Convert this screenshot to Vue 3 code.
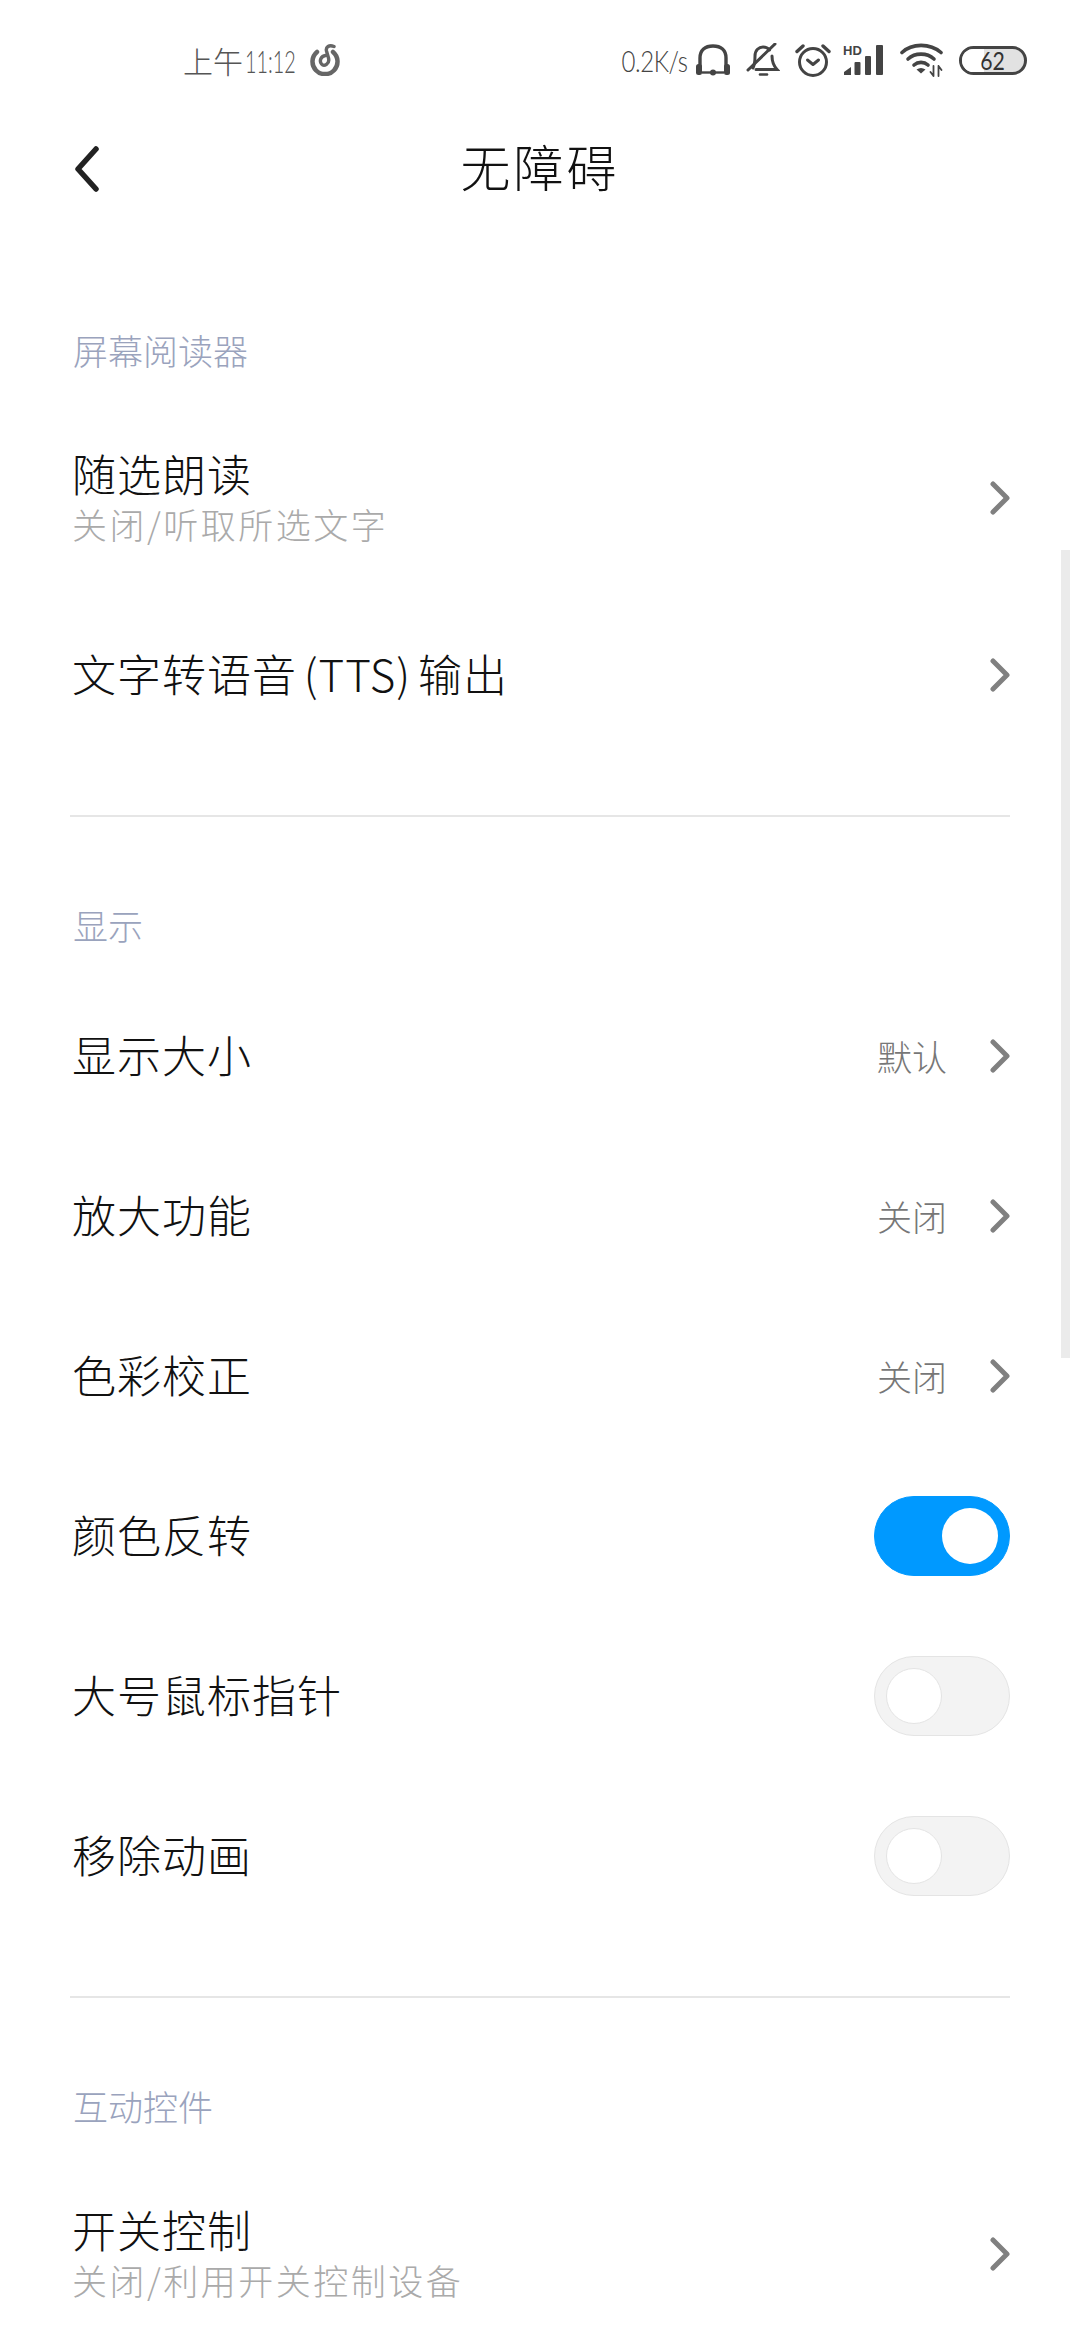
<template>
  <div class="screen">
    <div class="status-bar">
      <div class="status-left">
        <span class="time">上午<span class="time-num">11:12</span></span>
        <svg class="netease" width="30" height="32" viewBox="0 0 30 32" fill="none" stroke="#666" stroke-width="4.500" stroke-linecap="round">
          <path d="M7 8A12.500 12.500 0 1 0 23 8" />
          <path d="M24 2.500C19 0.500 15.500 3 16.500 7L18.500 14C20 20 14 23 11.500 20C9 17 11 12 15.500 11.500" stroke-width="3.400" />
        </svg>
      </div>
      <div class="status-right">
        <span class="speed">0.2K/s</span>
        <svg class="ic-headset" width="34" height="32" viewBox="0 0 34 32" fill="none" stroke="#444" stroke-width="3.400">
          <path d="M4 24V14C4 6 9 2 17 2S30 6 30 14V24" />
          <rect x="0" y="20" width="6" height="11" rx="2.500" fill="#444" stroke="none" />
          <rect x="28" y="20" width="6" height="11" rx="2.500" fill="#444" stroke="none" />
          <path d="M6 28.500H28" stroke-width="2.400" />
          <circle cx="17" cy="28.500" r="3" fill="#444" stroke="none" />
        </svg>
        <svg class="ic-bell" width="34" height="34" viewBox="0 0 34 34" fill="none" stroke="#444" stroke-width="3" stroke-linecap="round">
          <path d="M7 25C9 21 9 18 9 13C9 7 13 4 17 4C19.500 4 22 5 23.500 7" />
          <path d="M26 13C26 18 27 22 31 26.500H10" />
          <path d="M2 27L29 1" />
          <path d="M14 31.500H21" stroke-width="2.600" />
        </svg>
        <svg class="ic-alarm" width="36" height="34" viewBox="0 0 36 34" fill="none" stroke="#444" stroke-width="3" stroke-linecap="round" stroke-linejoin="round">
          <circle cx="18" cy="19" r="13.500" />
          <path d="M12.500 17L18 21.500L23.500 17" />
          <path d="M2 8.500L8 3" stroke-width="3.400" />
          <path d="M34 8.500L28 3" stroke-width="3.400" />
        </svg>
        <svg class="ic-signal" width="44" height="32" viewBox="0 0 44 32" fill="#444">
          <text class="hd" x="0" y="11">HD</text>
          <path d="M1 31V28L8 23V31Z" />
          <rect x="11.500" y="18" width="6" height="13" rx="1" />
          <rect x="22" y="12" width="6" height="19" rx="1" />
          <rect x="33" y="1" width="7" height="30" rx="1" />
        </svg>
        <svg class="ic-wifi" width="44" height="34" viewBox="0 0 44 34" fill="none" stroke="#444" stroke-width="3.600" stroke-linecap="round">
          <path d="M2 9.500C12 0 30 0 41 9.500" />
          <path d="M8 16C15 9.500 27 9.500 34 16" />
          <path d="M14 22C18 18.500 24 18.500 28 22" />
          <path d="M16.500 26.500L21 30.500L25.500 26.500C22.500 24.500 19.500 24.500 16.500 26.500Z" fill="#444" stroke="none" />
          <path d="M33.500 23V33M30.500 29L33.500 33M38.500 33V23M38.500 23L41.500 27" stroke-width="1.800" />
        </svg>
        <div class="battery">
          <div class="battery-fill"></div>
          <span class="battery-num">62</span>
        </div>
      </div>
    </div>

    <div class="nav">
      <svg class="back" width="24" height="46" viewBox="0 0 24 46" fill="none" stroke="#222" stroke-width="5.500" stroke-linecap="round" stroke-linejoin="round">
        <path d="M21 3L3 23L21 43" />
      </svg>
      <span class="nav-title">无障碍</span>
    </div>

    <div class="list">
      <section v-for="(section, i) in sections" :key="section.title" class="section" :class="{ first: i === 0 }">
        <div class="section-title">{{ section.title }}</div>
        <div v-for="row in section.rows" :key="row.title" class="row" :class="{ tall: row.sub }">
          <div class="row-text">
            <div class="row-title">{{ row.title }}</div>
            <div v-if="row.sub" class="row-sub">{{ row.sub }}</div>
          </div>
          <span v-if="row.value" class="row-value">{{ row.value }}</span>
          <div v-if="row.toggle !== undefined" class="toggle" :class="{ on: row.toggle }">
            <span class="knob"></span>
          </div>
          <svg v-else class="chevron" width="20" height="34" viewBox="0 0 20 34" fill="none" stroke="#808080" stroke-width="5" stroke-linecap="round" stroke-linejoin="round">
            <path d="M3 3L17 17L3 31" />
          </svg>
        </div>
      </section>
    </div>

    <div class="scrollbar"></div>
  </div>
</template>

<script setup>
const sections = [
  {
    title: '屏幕阅读器',
    rows: [
      { title: '随选朗读', sub: '关闭/听取所选文字' },
      { title: '文字转语音 (TTS) 输出' }
    ]
  },
  {
    title: '显示',
    rows: [
      { title: '显示大小', value: '默认' },
      { title: '放大功能', value: '关闭' },
      { title: '色彩校正', value: '关闭' },
      { title: '颜色反转', toggle: true },
      { title: '大号鼠标指针', toggle: false },
      { title: '移除动画', toggle: false }
    ]
  },
  {
    title: '互动控件',
    rows: [
      { title: '开关控制', sub: '关闭/利用开关控制设备' }
    ]
  }
]
</script>

<style>
html,
body {
  margin: 0;
  background: #fff;
}
</style>

<style scoped>
.screen {
  position: relative;
  width: 1080px;
  height: 2340px;
  overflow: hidden;
  background: #fff;
  font-family: "Noto Sans CJK SC", "Noto Sans", sans-serif;
  font-weight: 300;
}

.status-bar {
  display: flex;
  justify-content: space-between;
  align-items: center;
  height: 124px;
  padding: 0 53px 4px 183px;
  box-sizing: border-box;
}

.status-left,
.status-right {
  display: flex;
  align-items: center;
}

.time {
  font-size: 30px;
  color: #555;
  margin-right: 17px;
  white-space: nowrap;
}

/* digits of the reference's font are very narrow, squeeze them */
.time-num {
  display: inline-block;
  width: 78px;
  margin-right: -30px;
  margin-left: 2px;
  font-family: Lato, "Liberation Sans", sans-serif;
  font-size: 32px;
  font-weight: 300;
  transform: scaleX(0.62);
  transform-origin: left center;
}

.speed {
  font-family: Lato, "Liberation Sans", sans-serif;
  font-size: 30px;
  font-weight: 300;
  color: #444;
  margin-right: 8px;
  letter-spacing: -0.500px;
  transform: scaleX(0.8);
  transform-origin: right center;
}

.ic-bell {
  margin-left: 16px;
}

.ic-alarm {
  margin-left: 15px;
}

.ic-signal {
  margin-left: 12px;
}

.ic-wifi {
  margin-left: 13px;
}

.hd {
  font-family: "Liberation Sans", sans-serif;
  font-size: 13px;
  font-weight: 700;
}

.battery {
  position: relative;
  width: 68px;
  height: 29px;
  margin-left: 15px;
  box-sizing: border-box;
  border: 3px solid #444;
  border-radius: 15px;
  display: flex;
  align-items: center;
  justify-content: center;
  overflow: hidden;
  background: #e2e2e2;
}

.battery-fill {
  position: absolute;
  top: 0;
  bottom: 0;
  left: 0;
  width: 36%;
  background: #fff;
}

.battery-num {
  position: relative;
  font-family: Lato, "Liberation Sans", sans-serif;
  font-size: 25px;
  font-weight: 400;
  color: #333;
  transform: scaleX(0.85);
}

.nav {
  position: relative;
  display: flex;
  align-items: center;
  justify-content: center;
  height: 88px;
}

.back {
  position: absolute;
  left: 75px;
  top: 22px;
}

.nav-title {
  font-size: 50px;
  color: #111;
  letter-spacing: 3px;
  margin-top: -6px;
}

.section {
  padding: 83px 0 60px;
  margin: 0 70px;
  border-bottom: 2px solid #e6e6e6;
}

.section.first {
  padding-top: 113px;
}

.section:last-child {
  border-bottom: none;
}

.section-title {
  height: 50px;
  line-height: 50px;
  margin-bottom: 26px;
  padding-left: 3px;
  font-size: 35px;
  color: #9aa3bd;
}

.row {
  display: flex;
  align-items: center;
  height: 160px;
}

.row.tall {
  height: 194px;
}

.row-text {
  flex: 1;
  padding: 0 0 5px 2px;
}

.row.tall .row-text {
  padding-bottom: 0;
}

.row-title {
  font-size: 44px;
  line-height: 52px;
  color: #111;
  letter-spacing: 1px;
  word-spacing: -4px;
}

.row-sub {
  font-size: 35px;
  line-height: 50px;
  color: #aaa;
  letter-spacing: 2.500px;
}

.row-value {
  font-size: 35px;
  color: #777;
  margin-right: 43px;
  padding-bottom: 2px;
}

.chevron {
  flex: none;
}

.toggle {
  position: relative;
  flex: none;
  width: 136px;
  height: 80px;
  box-sizing: border-box;
  border-radius: 40px;
  background: #f3f3f3;
  border: 1px solid #e4e4e4;
}

.toggle.on {
  background: #0099ff;
  border-color: #0099ff;
}

.knob {
  position: absolute;
  left: 11px;
  top: 11px;
  width: 56px;
  height: 56px;
  box-sizing: border-box;
  border-radius: 50%;
  background: #fff;
  border: 1px solid #e4e4e4;
}

.toggle.on .knob {
  left: auto;
  right: 11px;
  border: none;
}

.scrollbar {
  position: absolute;
  left: 1061px;
  top: 550px;
  width: 9px;
  height: 808px;
  background: #ebebeb;
}
</style>
